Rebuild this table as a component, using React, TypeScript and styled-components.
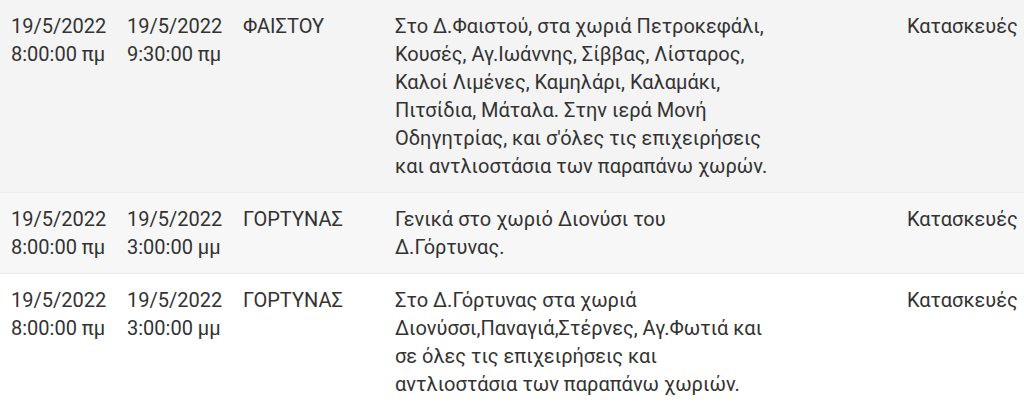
import React from "react";
import styled, { createGlobalStyle } from "styled-components";

const GlobalStyle = createGlobalStyle`
  html, body {
    margin: 0;
    padding: 0;
    background: #fff;
  }
  body {
    font-family: Roboto, "Noto Sans", "DejaVu Sans", sans-serif;
    color: #333;
  }
`;

interface Outage {
  from: [string, string];
  to: [string, string];
  area: string;
  details: string;
  cause: string;
}

const rows: Outage[] = [
  {
    from: ["19/5/2022", "8:00:00 πμ"],
    to: ["19/5/2022", "9:30:00 πμ"],
    area: "ΦΑΙΣΤΟΥ",
    details:
      "Στο Δ.Φαιστού, στα χωριά Πετροκεφάλι, Κουσές, Αγ.Ιωάννης, Σίββας, Λίσταρος, Καλοί Λιμένες, Καμηλάρι, Καλαμάκι, Πιτσίδια, Μάταλα. Στην ιερά Μονή Οδηγητρίας, και σ'όλες τις επιχειρήσεις και αντλιοστάσια των παραπάνω χωρών.",
    cause: "Κατασκευές",
  },
  {
    from: ["19/5/2022", "8:00:00 πμ"],
    to: ["19/5/2022", "3:00:00 μμ"],
    area: "ΓΟΡΤΥΝΑΣ",
    details: "Γενικά στο χωριό Διονύσι του Δ.Γόρτυνας.",
    cause: "Κατασκευές",
  },
  {
    from: ["19/5/2022", "8:00:00 πμ"],
    to: ["19/5/2022", "3:00:00 μμ"],
    area: "ΓΟΡΤΥΝΑΣ",
    details:
      "Στο Δ.Γόρτυνας στα χωριά Διονύσσι,Παναγιά,Στέρνες, Αγ.Φωτιά και σε όλες τις επιχειρήσεις και αντλιοστάσια των παραπάνω χωριών.",
    cause: "Κατασκευές",
  },
];

const Table = styled.div`
  display: flex;
  flex-direction: column;
`;

const Row = styled.div<{ $shade?: string }>`
  display: grid;
  grid-template-columns: 116px 116px 152px 512px 1fr;
  padding: 12px 0 12px 11px;
  background: ${props => props.$shade || "#fff"};
  border-bottom: 1px solid #ebebeb;
  font-size: 20px;
  line-height: 28px;
`;

const Cell = styled.div`
  display: flex;
  flex-direction: column;
`;

const Details = styled.div`
  max-width: 381px;
`;

const shades = ["#f4f4f4", "#f7f7f7", "#fff"];

const App = () => {
  return (
    <>
      <GlobalStyle />
      <Table>
        {rows.map((r, i) => (
          <Row key={i} $shade={shades[i]}>
            <Cell>
              <span>{r.from[0]}</span>
              <span>{r.from[1]}</span>
            </Cell>
            <Cell>
              <span>{r.to[0]}</span>
              <span>{r.to[1]}</span>
            </Cell>
            <Cell>{r.area}</Cell>
            <Details>{r.details}</Details>
            <Cell>{r.cause}</Cell>
          </Row>
        ))}
      </Table>
    </>
  );
};

export default App;
